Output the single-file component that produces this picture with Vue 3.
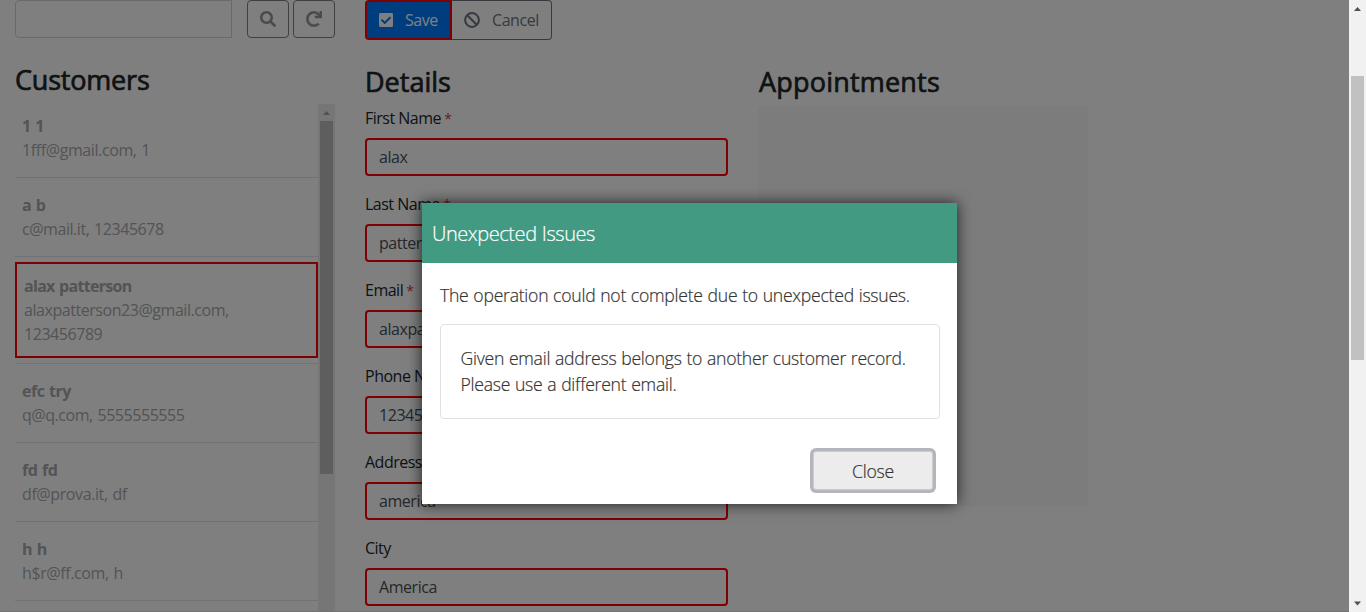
<script setup>
const customers = [
  { name: '1 1', contact: '1fff@gmail.com, 1', cls: 'airy' },
  { name: 'a b', contact: 'c@mail.it, 12345678' },
  { name: 'alax patterson', contact: 'alaxpatterson23@gmail.com, 123456789', selected: true },
  { name: 'efc try', contact: 'q@q.com, 5555555555' },
  { name: 'fd fd', contact: 'df@prova.it, df', cls: 'airy' },
  { name: 'h h', contact: 'h$r@ff.com, h', cls: 'airy' },
]
const fields = [
  { label: 'First Name', required: true, value: 'alax' },
  { label: 'Last Name', required: true, value: 'patterson' },
  { label: 'Email', required: true, value: 'alaxpatterson23@gmail.com' },
  { label: 'Phone Number', required: true, value: '123456789' },
  { label: 'Address', value: 'america' },
  { label: 'City', value: 'America' },
]
</script>

<template>
  <div class="screen">
    <main class="page">
      <section class="sidebar">
        <div class="search">
          <div class="search-box"></div>
          <button class="icon-btn">
            <svg width="16" height="16" viewBox="0 0 512 512"><path fill="currentColor" d="M505 442.700 405.300 343c-4.500-4.500-10.600-7-17-7H372c27.600-35.300 44-79.700 44-128C416 93.100 322.900 0 208 0S0 93.100 0 208s93.100 208 208 208c48.300 0 92.700-16.400 128-44v16.300c0 6.400 2.500 12.500 7 17l99.700 99.700c9.400 9.400 24.600 9.400 33.900 0l28.300-28.300c9.400-9.400 9.400-24.600.1-34zM208 336c-70.700 0-128-57.200-128-128 0-70.700 57.200-128 128-128 70.700 0 128 57.200 128 128 0 70.700-57.200 128-128 128z"/></svg>
          </button>
          <button class="icon-btn second">
            <svg width="16" height="16" viewBox="0 0 512 512"><path fill="currentColor" stroke="currentColor" stroke-width="14" d="M500.330 0h-47.410a12 12 0 0 0-12 12.570l4 82.760A247.420 247.420 0 0 0 256 8C119.340 8 7.900 119.530 8 256.190 8.100 393.070 119.100 504 256 504a247.100 247.100 0 0 0 166.180-63.910 12 12 0 0 0 .48-17.430l-34-34a12 12 0 0 0-16.380-.55A176 176 0 1 1 402.100 157.800l-101.530-4.870a12 12 0 0 0-12.570 12v47.410a12 12 0 0 0 12 12h200.330a12 12 0 0 0 12-12V12a12 12 0 0 0-12-12z"/></svg>
          </button>
        </div>
        <h3 class="customers-title">Customers</h3>
        <div class="list">
          <div class="rows">
            <div v-for="c in customers" :key="c.name" class="row" :class="c.cls">
              <div class="entry" :class="{ selected: c.selected }">
                <strong>{{ c.name }}</strong>
                <span class="contact">{{ c.contact }}</span>
              </div>
            </div>
          </div>
          <div class="track">
            <svg class="up" width="17" height="17"><path d="M5 11 8.500 7l3.500 4z" fill="#a3a3a3"/></svg>
            <div class="thumb"></div>
          </div>
        </div>
      </section>

      <section class="form">
        <div class="actions">
          <button class="save">
            <svg width="14" height="16" viewBox="0 0 448 512"><path fill="currentColor" d="M400 480H48c-26.510 0-48-21.490-48-48V80c0-26.510 21.490-48 48-48h352c26.510 0 48 21.490 48 48v352c0 26.510-21.490 48-48 48zm-204.690-98.060 184-184c6.250-6.250 6.250-16.380 0-22.630l-22.630-22.630c-6.250-6.250-16.380-6.250-22.630 0L184 302.750l-70.060-70.060c-6.250-6.250-16.380-6.250-22.630 0l-22.630 22.630c-6.250 6.250-6.250 16.380 0 22.630l104 104c6.250 6.250 16.380 6.250 22.630-.01z"/></svg>
            <span>Save</span>
          </button>
          <button class="cancel">
            <svg width="16" height="16" viewBox="0 0 16 16" fill="none" stroke="currentColor" stroke-width="2"><circle cx="8" cy="8" r="6.900"/><path d="m3.300 3.300 9.400 9.400"/></svg>
            <span>Cancel</span>
          </button>
        </div>
        <h3 class="details-title">Details</h3>
        <div v-for="f in fields" :key="f.label" class="field">
          <label>{{ f.label }} <i v-if="f.required">*</i></label>
          <div class="input">{{ f.value }}</div>
        </div>
      </section>

      <section class="appointments">
        <h3 class="appointments-title">Appointments</h3>
        <div class="panel"></div>
      </section>
    </main>

    <div class="overlay">
      <div class="dialog">
        <header><span>Unexpected Issues</span></header>
        <div class="body">
          <p class="message">The operation could not complete due to unexpected issues.</p>
          <div class="card">
            <p>Given email address belongs to another customer record.</p>
            <p>Please use a different email.</p>
          </div>
        </div>
        <button class="close">Close</button>
      </div>
    </div>

    <div class="page-scroll">
      <svg width="17" height="17"><path d="M5 11 8.500 7l3.500 4z" fill="#505050"/></svg>
      <div class="page-thumb"></div>
      <svg class="down" width="17" height="17"><path d="M5 6.500h7l-3.500 4z" fill="#505050"/></svg>
    </div>
  </div>
</template>

<style>
body { overflow: hidden; }
</style>

<style scoped>
* { box-sizing: border-box; }
.screen {
  position: relative;
  display: flex;
  width: 1366px;
  height: 612px;
  overflow: hidden;
  background: #fff;
  color: #212529;
  font: 400 16px/24px "Open Sans", "Noto Sans", sans-serif;
  letter-spacing: -0.45px;
}
button { font: inherit; letter-spacing: inherit; margin: 0; }
h3 { margin: 0; font-size: 27px; line-height: 34px; font-weight: 400; -webkit-text-stroke: 0.7px currentColor; white-space: nowrap; }
p { margin: 0; white-space: nowrap; }
svg { flex: none; display: block; }
.page { display: flex; gap: 30px; width: 1349px; padding-left: 15px; border-bottom: 1px solid #e4e4e4; }
.sidebar { width: 320px; display: flex; flex-direction: column; }
.search { display: flex; height: 38px; flex: none; }
.search-box { width: 217px; border: 1px solid #ced4da; border-radius: 4px 0 0 4px; margin-right: 15px; }
.icon-btn { width: 42px; height: 38px; padding: 0; border: 1px solid #6c757d; border-radius: 4px; background: none; color: #858b91; display: flex; align-items: center; justify-content: center; opacity: .9; }
.second { margin-left: 4px; }
.customers-title { margin-top: 25px; height: 41px; letter-spacing: -0.2px; }
.list { display: flex; height: 508px; overflow: hidden; }
.rows { width: 303px; flex: none; color: #a6a8aa; }
.row { padding: 5px 0; border-bottom: 1px solid #e2e4e6; }
.row:first-child { padding-top: 0; }
.entry { padding: 10px 7px; }
.entry.selected { border: 2px solid #f00; }
.entry strong, .contact { display: block; }
.entry strong { letter-spacing: -0.5px; font-weight: 700; word-spacing: 1px; }
.entry.selected strong { letter-spacing: -0.7px; }
.contact { word-spacing: 1px; }
.airy .contact { letter-spacing: -0.4px; }
.track { width: 17px; background: #ececec; display: flex; flex-direction: column; align-items: center; }
.thumb { width: 13px; height: 353px; background: #bdbdbd; }
.form { width: 363px; }
.actions { display: flex; height: 40px; }
.save, .cancel { display: flex; align-items: center; }
.save { width: 87px; padding: 0 0 0 12px; gap: 12px; border: 2px solid #f00; border-radius: 4px 0 0 4px; background: #007bff; color: #fff; }
.cancel { width: 100px; padding: 0 0 0 12px; gap: 12px; border: 1px solid #6c757d; border-left: 0; border-radius: 0 4px 4px 0; background: none; color: #6c757d; }
.details-title { margin-top: 25px; height: 41px; letter-spacing: 0; }
.field { height: 86px; }
label { display: block; height: 32px; letter-spacing: -0.5px; }
label i { font-style: normal; font-size: 14px; line-height: 1; margin-left: -0.5px; color: #dc3545; }
.input { height: 38px; padding: 5px 12px; border: 2px solid #f00; border-radius: 4px; color: #495057; }
.appointments { width: 330px; padding-top: 65px; }
.appointments-title { height: 41px; padding-left: 1px; letter-spacing: 0.2px; }
.panel { height: 400px; border-radius: 4px; background: #f8f8f8; }
.overlay { position: absolute; inset: 0 17px 0 0; padding: 203px 0 0 422px; background: rgba(0, 0, 0, .5); }
.dialog { width: 535px; height: 301px; background: #fff; color: #333; box-shadow: 0 0 14px rgba(0, 0, 0, .75); font-size: 17.6px; line-height: 26px; font-weight: 300; letter-spacing: -0.25px; word-spacing: 0.5px; -webkit-text-stroke: 0.2px currentColor; display: flex; flex-direction: column; }
header { height: 60px; padding-left: 10px; background: #429a82; color: #fff; font-size: 20px; line-height: 61px; letter-spacing: -0.45px; }
.body { padding: 19px 17px 0 18px; }
.card { margin-top: 16px; height: 95px; padding: 20px 19.500px; border: 1px solid #dee2e6; border-radius: 4px; }
.close { width: 120px; height: 39px; margin: 32px 24px 0 auto; padding: 0; border: 1px solid #ccc; border-radius: 3px; background: #ececec; box-shadow: 0 0 0 3px #b3b6bd; color: #333; }
.page-scroll { width: 17px; height: 612px; background: #f1f1f1; display: flex; flex-direction: column; align-items: center; }
.page-thumb { width: 13px; height: 284px; margin-top: 59px; background: #c1c1c1; }
.down { margin-top: auto; }
</style>
